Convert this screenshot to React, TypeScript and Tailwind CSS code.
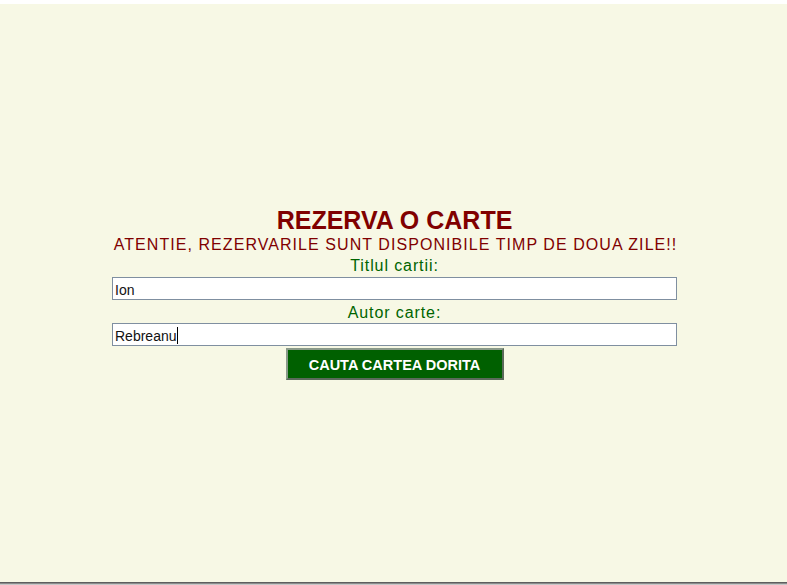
import React from "react";

export default function App() {
  const font = { fontFamily: '"Liberation Sans", Arial, sans-serif' };
  return (
    <div className="h-[585px] w-full bg-white flex flex-col overflow-hidden" style={font}>
      <div className="h-[4px] bg-white" />
      <div className="h-[578px] bg-[#f7f8e5] flex flex-col items-center pt-[202px]">
        <div className="ml-[2px] w-[565px] flex flex-col items-center">
          <h1 className="text-[25px] leading-[28px] font-bold text-[#800000]">REZERVA O CARTE</h1>
          <p className="mt-[2px] ml-[2px] text-[16px] leading-[18px] tracking-[1.06px] text-[#800000] whitespace-nowrap">
            ATENTIE, REZERVARILE SUNT DISPONIBILE TIMP DE DOUA ZILE!!
          </p>
          <label className="mt-[3px] text-[16px] leading-[18px] tracking-[0.9px] text-[#006400]">Titlul cartii:</label>
          <input
            readOnly
            value="Ion"
            className="mt-[2px] w-[565px] h-[23px] border border-[#7f8fa0] bg-white px-[2px] pt-[3px] pb-0 text-[14px] text-[#111] outline-none"
            style={font}
          />
          <label className="mt-[4px] text-[16px] leading-[18px] tracking-[0.9px] text-[#006400]">Autor carte:</label>
          <div className="relative mt-[1px] w-[565px] h-[23px]">
            <input
              readOnly
              value="Rebreanu"
              className="w-full h-full border border-[#7f8fa0] bg-white px-[2px] pt-[3px] pb-0 text-[14px] text-[#111] outline-none"
              style={font}
            />
            <div className="absolute inset-0 flex items-center pl-[3px] pt-[2px] pointer-events-none">
              <span className="invisible text-[14px]">Rebreanu</span>
              <span className="w-[1px] h-[17px] bg-black" />
            </div>
          </div>
          <button
            className="mt-[2px] w-[218px] h-[32px] bg-[#006000] border-2 border-t-[#8a9a8a] border-l-[#8a9a8a] border-r-[#5a6a5a] border-b-[#5a6a5a] text-white font-bold text-[14.5px] leading-[30px]"
            style={font}
          >
            CAUTA CARTEA DORITA
          </button>
        </div>
      </div>
      <div className="h-[1px] bg-[#5e5e5e]" />
      <div className="h-[1px] bg-[#8a8a8a]" />
      <div className="flex-1 bg-[#c8c8c8]" />
    </div>
  );
}
